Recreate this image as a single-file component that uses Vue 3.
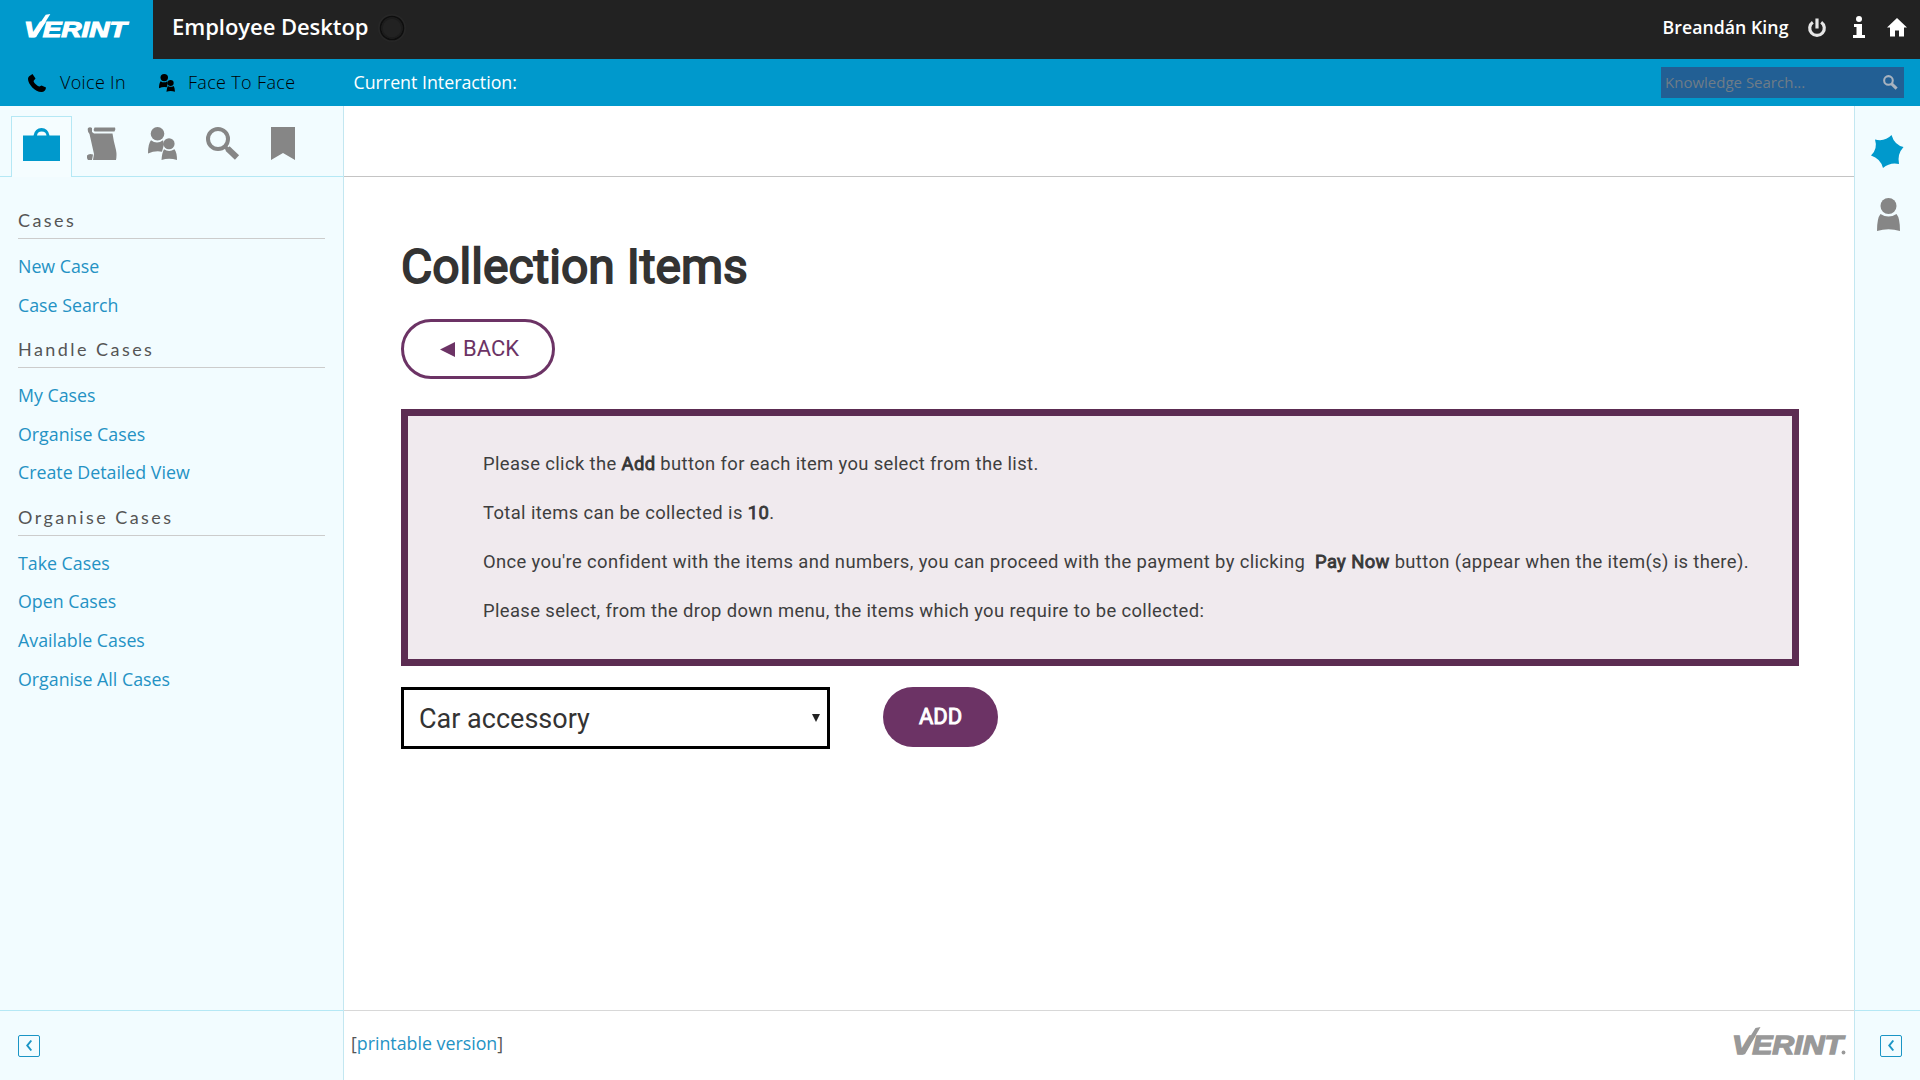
<script setup>
const groups = [
  { title: 'Cases', links: ['New Case', 'Case Search'] },
  { title: 'Handle Cases', links: ['My Cases', 'Organise Cases', 'Create Detailed View'] },
  { title: 'Organise Cases', links: ['Take Cases', 'Open Cases', 'Available Cases', 'Organise All Cases'] },
]
</script>

<template>
  <div class="app">
    <header class="top">
      <div class="brand">
        <svg width="106.300" height="32.300" viewBox="0 0 115 38" class="logo" preserveAspectRatio="none">
          <text x="0" y="27" textLength="111" lengthAdjust="spacingAndGlyphs" class="logo-text">VERINT</text>
          <path d="M7 27.300L23.500 1L28.500 0L13 27.300Z" />
        </svg>
      </div>
      <div class="title">Employee Desktop</div>
      <svg class="ring" width="30" height="30" viewBox="0 0 30 30">
        <circle cx="15" cy="15" r="13" fill="none" stroke="#272727" stroke-width="2" />
        <circle cx="15" cy="15" r="11.500" fill="none" stroke="#0e0e0e" stroke-width="1.600" />
        <circle cx="15" cy="15" r="10" fill="none" stroke="#1c1c1c" stroke-width="1.500" />
      </svg>
      <div class="user">Breandán King</div>
      <svg class="power" width="20" height="20" viewBox="0 0 20 20" fill="none" stroke="#e6e6e6" stroke-width="3.200">
        <path d="M5.800 4.200A7.300 7.300 0 1 0 14.200 4.200" />
        <path d="M10 .5V10.500" />
      </svg>
      <svg class="info" width="12" height="22" viewBox="0 0 12 22" fill="#fff">
        <circle cx="6" cy="3" r="3" />
        <path d="M1 8H9V19H12V22H0V19H3.500V11H1Z" />
      </svg>
      <svg class="home" width="20" height="19" viewBox="0 0 20 19" fill="#fff">
        <path d="M10 0L20 9.500H17V18.500H12V12.500H8V18.500H3V9.500H0Z" />
      </svg>
    </header>

    <div class="bar">
      <svg class="phone" width="18" height="18" viewBox="0 0 18 18">
        <path d="M1.500 2L4.500 0L7.500 4.500L5.500 7C6 9 9 12 11.500 12.500L13.500 11.500L18 13.500C18 16 16 18 13.500 18C7 18 0 10 0 5C0 3.500 .7 2.700 1.500 2Z" />
      </svg>
      <span class="voice">Voice In</span>
      <svg class="faces" width="16" height="18" viewBox="0 0 29 34" preserveAspectRatio="none">
        <ellipse cx="9.500" cy="6.800" rx="6.800" ry="6.800" />
        <path d="M3 13.500Q9 18 15 13.500L16 17.500L14 25Q7 23.500 0 27Q0 17 3 13.500Z" />
        <circle cx="21" cy="17" r="5.600" />
        <path d="M16 22.500Q21 26 26.500 22.500Q29 26 29 33.500Q21 31 13.500 33.500Q14 26 16 22.500Z" />
      </svg>
      <span class="face">Face To Face</span>
      <span class="current">Current Interaction:</span>
      <div class="search">
        <span>Knowledge Search...</span>
        <svg width="15" height="15" viewBox="0 0 33 33" fill="none" stroke="#a9b3bf">
          <circle cx="12" cy="12" r="9.500" stroke-width="4.500" />
          <path d="M18.500 19L30 30" stroke-width="6.500" />
        </svg>
      </div>
    </div>

    <div class="body">
      <aside class="side">
        <nav class="tabs">
          <div class="tab">
            <svg width="37" height="33" viewBox="0 0 37 33" fill="#0099cc">
              <path d="M0 7.500H10.500Q12 0 18.500 0T26.500 7.500H37V33H0Z M14 7.500H23.500Q23 3.500 18.700 3.500T14 7.500Z" fill-rule="evenodd" />
            </svg>
          </div>
          <svg class="i-scroll" width="30" height="33" viewBox="0 0 30 33" fill="#868686">
            <path d="M7.500 .5H28Q29 2 27.500 4.500H7.500Q6 2.500 7.500 .5Z" />
            <path d="M1 1Q3 -.7 5 1V5L7 6.500H25.500Q26.500 14 29 23Q30 28 29 33H6L7 27L2.500 7Q0 4 1 1Z" />
            <path d="M0 28.500Q2 26 6 27.500L5 33H1Q-.5 31 0 28.500Z" />
          </svg>
          <svg class="i-people" width="29" height="33" viewBox="0 0 29 33.500" fill="#868686" preserveAspectRatio="none">
            <ellipse cx="9.500" cy="6.800" rx="6.800" ry="6.800" />
            <path d="M3 13.500Q9 18 15 13.500L16 17.500L14 25Q7 23.500 0 27Q0 17 3 13.500Z" />
            <circle cx="21" cy="17" r="5.600" />
            <path d="M16 22.500Q21 26 26.500 22.500Q29 26 29 33.500Q21 31 13.500 33.500Q14 26 16 22.500Z" />
          </svg>
          <svg class="i-search" width="34" height="34" viewBox="0 0 34 34" fill="none" stroke="#868686">
            <circle cx="12" cy="12" r="10" stroke-width="4" />
            <path d="M18.500 19.500L23 23" stroke-width="4" />
            <path d="M21.500 21.500L31 30.500" stroke-width="6" />
          </svg>
          <svg class="i-mark" width="24" height="33" viewBox="0 0 24 33" fill="#868686">
            <path d="M0 0H24V33L12 26L0 33Z" />
          </svg>
        </nav>
        <div class="menu">
          <section v-for="g in groups" :key="g.title">
            <h2>{{ g.title }}</h2>
            <ul>
              <li v-for="l in g.links" :key="l"><a>{{ l }}</a></li>
            </ul>
          </section>
        </div>
        <div class="side-foot">
          <svg width="22" height="22" viewBox="0 0 22 22" fill="none" stroke="#1b95c5">
            <rect x=".5" y=".5" width="21" height="21" rx="1.500" />
            <path d="M13.300 5.500L9.300 10.500L13.300 15.500" stroke-width="2" />
          </svg>
        </div>
      </aside>

      <main class="main">
        <div class="strip"></div>
        <div class="content">
          <h1>Collection Items</h1>
          <button class="back">
            <svg width="15" height="15" viewBox="0 0 15 15"><path d="M0 7.500L15 0V15Z" fill="#6c3365" /></svg>
            <span>BACK</span>
          </button>
          <div class="notice">
            <p>Please click the <b>Add</b> button for each item you select from the list.</p>
            <p>Total items can be collected is <b>10</b>.</p>
            <p>Once you're confident with the items and numbers, you can proceed with the payment by clicking &nbsp;<b>Pay Now</b> button (appear when the item(s) is there).</p>
            <p>Please select, from the drop down menu, the items which you require to be collected:</p>
          </div>
          <div class="form">
            <div class="select">
              <span>Car accessory</span>
              <svg width="8" height="8" viewBox="0 0 8 8"><path d="M0 0H8L4 8Z" fill="#222" /></svg>
            </div>
            <button class="add">ADD</button>
          </div>
        </div>
        <footer class="foot">
          <span class="print">[<a>printable version</a>]</span>
          <svg class="foot-logo" width="115" height="38" viewBox="0 0 115 38">
            <text x="0" y="27" textLength="111" lengthAdjust="spacingAndGlyphs" class="logo-text">VERINT</text>
            <path d="M7 27.300L23.500 1L28.500 0L13 27.300Z" />
            <circle cx="111.500" cy="25.500" r="1.900" />
          </svg>
        </footer>
      </main>

      <aside class="right">
        <div class="right-top">
          <svg width="33" height="33" viewBox="0 0 33 33">
            <path d="M20.500 0Q23.500 10 32.500 12Q26 19 28 29Q19 27 12 33Q9.500 23.500 0 20.500Q7 14 4 4.500Q14 7 20.500 0Z" fill="#0099cc" />
          </svg>
          <svg class="person" width="23" height="33" viewBox="0 0 23 33" fill="#868686">
            <circle cx="11.500" cy="8" r="8" />
            <path d="M3.500 16Q11.500 21 19.500 16Q23 20 23 33Q11.500 29.500 0 33Q0 20 3.500 16Z" />
          </svg>
        </div>
        <div class="right-foot">
          <svg width="22" height="22" viewBox="0 0 22 22" fill="none" stroke="#1b95c5">
            <rect x=".5" y=".5" width="21" height="21" rx="1.500" />
            <path d="M13.300 5.500L9.300 10.500L13.300 15.500" stroke-width="2" />
          </svg>
        </div>
      </aside>
    </div>
  </div>
</template>

<style>
body { margin: 0; }
</style>

<style scoped>
* { box-sizing: border-box; }
svg { display: block; flex: none; }
.app {
  width: 1920px; height: 1080px; overflow: hidden;
  display: flex; flex-direction: column;
  font-family: "Open Sans", sans-serif; font-size: 17.800px; background: #fff;
  white-space: nowrap;
}
.top { height: 59px; background: #222; display: flex; align-items: flex-start; color: #fff; flex: none; }
.brand { width: 152.500px; height: 59px; background: #0099cc; padding: 14px 0 0 24px; flex: none; }
.logo { fill: #fff; }
.logo-text { font: italic bold 25px "Liberation Sans", sans-serif; stroke-width: 1.300px; }
.logo .logo-text { stroke: #fff; }
.title { margin-left: 19.500px; width: 198px; font-size: 22px; font-weight: 600; line-height: 53px; letter-spacing: -.05px; }
.ring { margin: 13px 0 0 7px; }
.user { margin-left: auto; width: 127.500px; font-size: 17.700px; font-weight: 600; line-height: 54px; letter-spacing: .05px; }
.power { margin: 18px 0 0 17px; }
.info { margin: 16px 0 0 26px; }
.home { margin: 18px 13px 0 22px; }

.bar { height: 47px; background: #0099cc; display: flex; align-items: center; flex: none; color: #000; line-height: 47px; }
.phone { margin-left: 28px; }
.voice { margin-left: 14px; width: 66px; }
.faces { margin-left: 32.500px; }
.voice, .face { font-weight: 300; font-size: 18px; letter-spacing: .33px; }
.face { margin-left: 13.500px; width: 120px; }
.current { margin-left: 45.500px; color: #fff; }
.search { margin: 0 16px 0 auto; width: 243px; height: 31px; background: #225f94; display: flex; align-items: center; justify-content: space-between; padding: 0 6px 0 4px; }
.search span { font-size: 15px; color: #6f7c87; line-height: 31px; }

.body { flex: 1; display: flex; min-height: 0; }
.side { width: 344px; background: #f2fcff; border-right: 1px solid #c3e7f1; display: flex; flex-direction: column; }
.tabs { height: 71px; border-bottom: 1px solid #b5e8f5; display: flex; padding-left: 11px; flex: none; align-items: flex-start; }
.tab { width: 61px; height: 61px; margin-top: 10px; border: 1px solid #b5e8f5; border-bottom: 0; background: #f5fdff; padding: 11px 0 0 11px; }
.i-scroll { margin: 21px 0 0 15px; }
.i-people { margin: 21px 0 0 31px; }
.i-search { margin: 21px 0 0 29px; }
.i-mark { margin: 21px 0 0 31px; }
.menu { flex: 1; padding: 18.400px 18px 0; }
h2 {
  margin: 0 0 8.100px; height: 43.600px; display: flex; align-items: flex-end; padding-bottom: 5.500px;
  border-bottom: 1px solid #ccc; font: 400 18px/24px Lato, sans-serif; letter-spacing: 2.450px; color: #555;
}
ul { list-style: none; margin: 0; padding: 0; }
li { height: 38.650px; line-height: 38.650px; }
a { color: #2492c4; }
.side-foot, .right-foot { height: 70px; border-top: 1px solid #b5e8f5; flex: none; padding-top: 24px; }
.side-foot { padding-left: 18px; }

.main { flex: 1; display: flex; flex-direction: column; min-width: 0; }
.strip { height: 71px; border-bottom: 1px solid #c4c4c4; flex: none; }
.content { flex: 1; padding: 60px 55px 0 57px; font-family: Roboto, sans-serif; color: #333; }
h1 { margin: 0; font-size: 48px; line-height: 60px; font-weight: 400; -webkit-text-stroke: 1.800px #333; }
button { font-family: inherit; margin: 0; }
.back {
  margin-top: 22px; width: 154px; height: 60px; border: 3px solid #6c3365; border-radius: 30px; background: #fff;
  display: flex; align-items: center; padding: 0 0 0 36px; gap: 8px; color: #6c3365; font-size: 22px; line-height: 54px;
}
.notice { margin-top: 30px; height: 257px; border: 7px solid #5c2c52; background: #f0eaee; padding: 36px 0 0 75px; }
p { margin: 0 0 25px; font-size: 18.400px; line-height: 24px; letter-spacing: .375px; color: #3e3e3e; }
b { font-weight: 400; -webkit-text-stroke: .8px #333; }
.form { margin-top: 21px; display: flex; align-items: flex-start; }
.select { width: 429px; height: 62px; border: 3px solid #000; display: flex; align-items: center; justify-content: space-between; padding: 0 7px 0 15px; font-size: 27px; }
.select span { padding-top: 2px; }
.add { margin-left: 53px; width: 115px; height: 60px; border: 0; border-radius: 30px; background: #6c3365; color: #fff; font-size: 22px; -webkit-text-stroke: .9px #fff; padding: 0 0 1px; }
.foot { height: 70px; border-top: 1px solid #d8d8d8; display: flex; justify-content: space-between; padding: 0 7px; color: #555; flex: none; }
.print { line-height: 65px; }
.foot-logo { margin-top: 16px; fill: #999; }
.foot-logo .logo-text { stroke: #999; }
.right { width: 66px; background: #f2fcff; border-left: 1px solid #c3e7f1; display: flex; flex-direction: column; }
.right-top { flex: 1; padding: 29px 0 0 16px; }
.person { margin: 30px 0 0 6px; }
.right-foot { padding-left: 25px; }
</style>
